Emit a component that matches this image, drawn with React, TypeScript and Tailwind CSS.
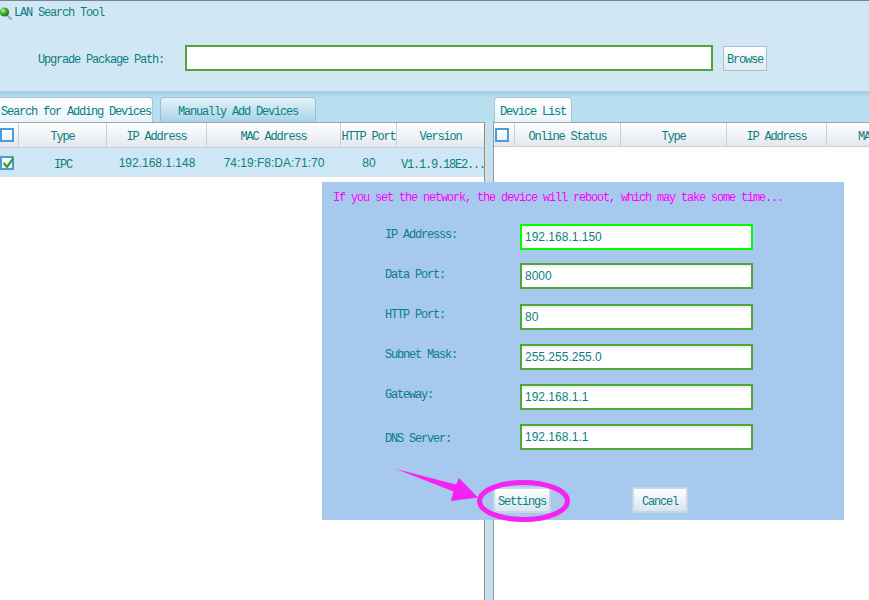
import React from "react";

const mono = "font-['Liberation_Mono',monospace] text-[12px] tracking-[-1.2px] leading-[14px]";
const shift = "translate-y-[1.5px]";
const sans = "font-['Liberation_Sans',Arial,sans-serif] text-[12px] leading-[14px]";

function Check({ checked }: { checked?: boolean }) {
  return (
    <div className="relative w-[14px] h-[14px] border-2 border-[#4a9bd9] bg-linear-to-b from-white to-[#eef4fa]">
      {checked && (
        <svg className="absolute left-[1px] top-[-1px]" width="11" height="12" viewBox="0 0 11 12">
          <path d="M1 6.5 L4 10 L10 1.5" fill="none" stroke="#3aa02a" strokeWidth="2.2" strokeLinecap="round" strokeLinejoin="round" />
        </svg>
      )}
    </div>
  );
}

function Field({ label, value, focused, labelPad, mt }: { label: string; value: string; focused?: boolean; labelPad: string; mt: string }) {
  return (
    <div className={`flex items-start ${mt}`}>
      <div className={`w-[135px] ${mono} ${labelPad}`}>
        <span className={`block ${shift}`}>{label}</span>
      </div>
      <div
        className={`w-[233px] h-[26px] bg-white flex items-center pl-[3px] ${sans} ${
          focused ? "border-2 border-[#00ff00]" : "border-2 border-[#4fa63b] shadow-[inset_0_2px_3px_rgba(0,0,0,0.08)]"
        }`}
      >
        {value}
      </div>
    </div>
  );
}

function Btn({ children, w }: { children: React.ReactNode; w: string }) {
  return (
    <div className={`${w} h-[26px] border-2 border-[#c5d6e8] bg-[#e9f1f7] p-0`}>
      <div className={`w-full h-full bg-linear-to-b from-white to-[#d8e5ee] flex items-center justify-center ${mono}`}>
        <span className={shift}>{children}</span>
      </div>
    </div>
  );
}

function M({ children }: { children: React.ReactNode }) {
  return <span className={`${mono} ${shift} whitespace-nowrap`}>{children}</span>;
}

export default function App() {
  return (
    <div className="relative w-[869px] h-[600px] overflow-hidden bg-white text-[#0a7f80]">
      {/* Header */}
      <div className="h-[91px] bg-[#d1e8f4] border-t border-[#6e8797] flex flex-col">
        <div className="h-[20px] flex items-center">
          <svg width="14" height="17" viewBox="0 0 14 17" className="mt-[1px]">
            <defs>
              <radialGradient id="gb" cx="35%" cy="35%" r="70%">
                <stop offset="0%" stopColor="#c8f5a8" />
                <stop offset="45%" stopColor="#43b52a" />
                <stop offset="100%" stopColor="#1c6f14" />
              </radialGradient>
            </defs>
            <line x1="7" y1="12" x2="11" y2="16" stroke="#9aa7b0" strokeWidth="2" strokeLinecap="round" />
            <circle cx="4.5" cy="9" r="4.6" fill="url(#gb)" />
          </svg>
          <M>LAN Search Tool</M>
        </div>
        <div className="mt-[24px] flex items-center">
          <div className="ml-[38px] w-[147px] flex">
            <M>Upgrade Package Path:</M>
          </div>
          <div className="w-[528px] h-[26px] border-2 border-[#4fa63b] bg-white" />
          <div className="ml-[10px] w-[44px] h-[25px] border border-[#a9bdd6] bg-linear-to-b from-white to-[#dde9f0] flex items-center justify-center">
            <M>Browse</M>
          </div>
        </div>
      </div>

      {/* Tab strip */}
      <div className="h-[31px] bg-linear-to-b from-[#9fcbe3] via-[#b8dff0] via-20% to-[#b8dff0] flex items-end">
        <div className="w-[494px] flex items-end">
          <div className="ml-[-2px] w-[155px] h-[25px] rounded-t-[4px] border border-b-0 border-[#a9c3d4] bg-linear-to-b from-white to-[#eaf4fa] flex items-center pl-[2px]">
            <M>Search for Adding Devices</M>
          </div>
          <div className="ml-[7px] w-[156px] h-[25px] rounded-t-[4px] border border-b-0 border-[#a2bccb] bg-linear-to-b from-[#e2f2fa] to-[#a9d3e6] flex items-center justify-center">
            <M>Manually Add Devices</M>
          </div>
        </div>
        <div className="w-[78px] h-[25px] rounded-t-[4px] border border-b-0 border-[#a9c3d4] bg-linear-to-b from-white to-[#eaf4fa] flex items-center pl-[5px]">
          <M>Device List</M>
        </div>
      </div>

      {/* Body */}
      <div className="flex h-[478px]">
        {/* Left table */}
        <div className="w-[485px] border-t border-r border-t-[#98a7b4] border-r-[#a08a74] bg-white flex flex-col">
          <div className="grid grid-cols-[19px_88px_100px_134px_56px_1fr] h-[25px] bg-linear-to-b from-white to-[#e3e7ee] border-b border-[#c8d0da]">
            <div className="flex items-center border-r border-[#c8d0da]"><Check /></div>
            <div className="flex items-center justify-center border-r border-[#c8d0da]"><M>Type</M></div>
            <div className="flex items-center justify-center border-r border-[#c8d0da]"><M>IP Address</M></div>
            <div className="flex items-center justify-center border-r border-[#c8d0da]"><M>MAC Address</M></div>
            <div className="flex items-center justify-center border-r border-[#c8d0da]"><M>HTTP Port</M></div>
            <div className="flex items-center justify-center"><M>Version</M></div>
          </div>
          <div className="grid grid-cols-[19px_88px_100px_134px_56px_1fr] h-[29px] bg-[#cfe7f4]">
            <div className="flex items-center"><Check checked /></div>
            <div className="flex items-center justify-center"><M>IPC</M></div>
            <div className={`flex items-center justify-center ${sans}`}>192.168.1.148</div>
            <div className={`flex items-center justify-center ${sans}`}>74:19:F8:DA:71:70</div>
            <div className={`flex items-center justify-center ${sans}`}>80</div>
            <div className="flex items-center pl-[4px]"><M>V1.1.9.18E2...</M></div>
          </div>
        </div>
        {/* Divider */}
        <div className="w-[9px] bg-[#c6e0f0] border-r border-[#8a9aaa]" />
        {/* Right table */}
        <div className="flex-1 border-t border-[#98a7b4] bg-white overflow-hidden">
          <div className="grid grid-cols-[21px_106px_106px_100px_128px] h-[24px] bg-linear-to-b from-white to-[#e3e7ee] border-b border-[#c8d0da]">
            <div className="flex items-center pl-[1px] border-r border-[#c8d0da]"><Check /></div>
            <div className="flex items-center justify-center border-r border-[#c8d0da]"><M>Online Status</M></div>
            <div className="flex items-center justify-center border-r border-[#c8d0da]"><M>Type</M></div>
            <div className="flex items-center justify-center border-r border-[#c8d0da]"><M>IP Address</M></div>
            <div className="flex items-center justify-center"><M>MAC Address</M></div>
          </div>
        </div>
      </div>

      {/* Dialog */}
      <div className="absolute left-[322px] top-[182px] w-[522px] h-[338px] bg-[#a7c9ee] flex flex-col">
        <div className={`pt-[7px] pl-[11px] text-[#ff00ff] ${mono}`}>
          <span className={`block ${shift}`}>If you set the network, the device will reboot, which may take some time...</span>
        </div>
        <div className="pl-[63px] flex flex-col">
          <Field label="IP Addresss:" value="192.168.1.150" focused labelPad="pt-[2px]" mt="mt-[21px]" />
          <Field label="Data Port:" value="8000" labelPad="pt-[3px]" mt="mt-[13px]" />
          <Field label="HTTP Port:" value="80" labelPad="pt-[2px]" mt="mt-[15px]" />
          <Field label="Subnet Mask:" value="255.255.255.0" labelPad="pt-[2px]" mt="mt-[14px]" />
          <Field label="Gateway:" value="192.168.1.1" labelPad="pt-[2px]" mt="mt-[14px]" />
          <Field label="DNS Server:" value="192.168.1.1" labelPad="pt-[6px]" mt="mt-[14px]" />
        </div>
        <div className="flex mt-[37px]">
          <div className="ml-[171px]"><Btn w="w-[58px]">Settings</Btn></div>
          <div className="ml-[81px]"><Btn w="w-[56px]">Cancel</Btn></div>
        </div>
      </div>

      {/* Annotation */}
      <svg className="absolute left-0 top-0 pointer-events-none" width="869" height="600" viewBox="0 0 869 600">
        <ellipse cx="523.5" cy="501" rx="44" ry="18.5" fill="none" stroke="#f522f2" strokeWidth="5" />
        <polygon points="396,469 456,484.5 459,478 478,497.5 451,501 453.5,491.5" fill="#f522f2" />
      </svg>
    </div>
  );
}
